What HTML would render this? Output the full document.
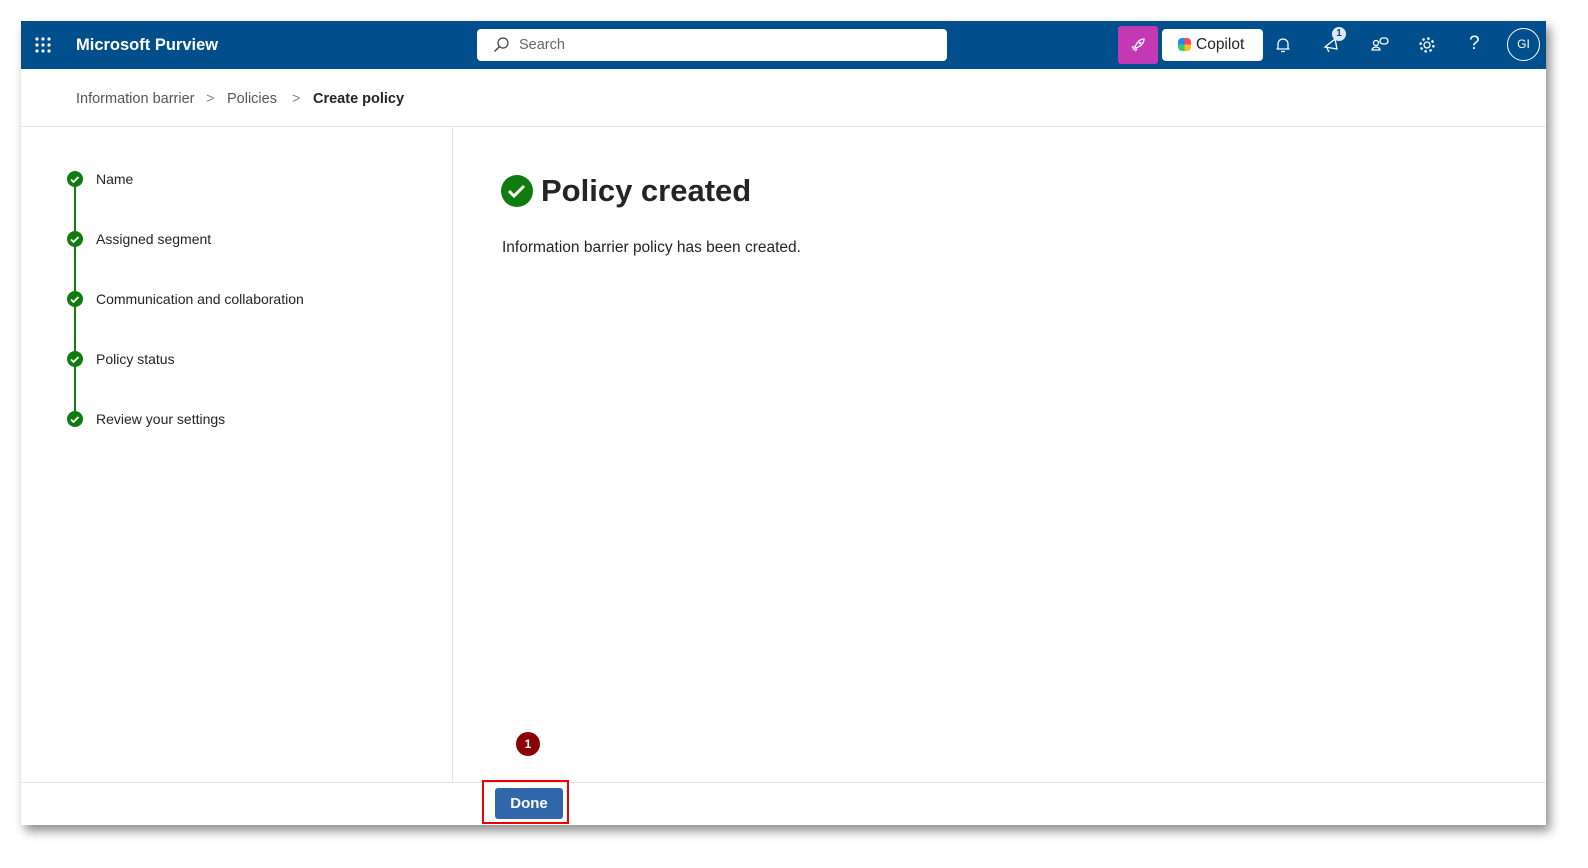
<!DOCTYPE html>
<html><head><meta charset="utf-8"><style>
*{margin:0;padding:0;box-sizing:border-box}
body{width:1588px;height:868px;background:#fff;font-family:"Liberation Sans",sans-serif;position:relative;overflow:hidden}
.win{position:absolute;left:21px;top:21px;width:1525px;height:804px;background:#fff;box-shadow:4px 6px 10px rgba(0,0,0,.45)}
.top{position:absolute;left:0;top:0;width:1525px;height:48px;background:#004e8c;color:#fff}
.abs{position:absolute}
.crumb{position:absolute;top:70px;font-size:14.5px;color:#555}
.step{position:absolute;left:46px;width:16px;height:16px;border-radius:50%;background:#107c10}
.stepline{position:absolute;left:53px;width:2px;height:44px;background:#107c10}
.stxt{position:absolute;left:75px;font-size:14px;color:#242424}
</style></head><body>
<div class="win">
 <div class="top">
  <svg class="abs" style="left:14px;top:16px" width="16" height="16"><g fill="#fff"><circle cx="2" cy="2" r="1.6"/><circle cx="8" cy="2" r="1.6"/><circle cx="14" cy="2" r="1.6"/><circle cx="2" cy="8" r="1.6"/><circle cx="8" cy="8" r="1.6"/><circle cx="14" cy="8" r="1.6"/><circle cx="2" cy="14" r="1.6"/><circle cx="8" cy="14" r="1.6"/><circle cx="14" cy="14" r="1.6"/></g></svg>
  <div class="abs" style="left:55px;top:15px;font-size:16.5px;font-weight:bold">Microsoft Purview</div>
  <div class="abs" style="left:456px;top:8px;width:470px;height:32px;background:#fff;border-radius:4px;color:#666;font-size:14.5px;padding:8px 0 0 42px">Search
   <svg class="abs" style="left:16px;top:8px" width="16" height="16"><circle cx="10" cy="6" r="5" fill="none" stroke="#444" stroke-width="1.3"/><path d="M6.5 9.5 L1.5 14.5" stroke="#444" stroke-width="1.4"/></svg></div>
  <div class="abs" style="left:1097px;top:5px;width:40px;height:38px;background:#c239b3;border-radius:3px"><svg class="abs" style="left:12px;top:11px" width="16" height="16"><path d="M5 11 L3 13 M7 12 L5 14 M4 9 L2 11 M5 10 C7 5 10 2 14 2 C14 6 11 9 6 11 Z" fill="none" stroke="#fff" stroke-width="1.3"/><circle cx="10" cy="6" r="1.3" fill="#fff"/></svg></div>
  <div class="abs" style="left:1141px;top:8px;width:101px;height:32px;background:#fff;border-radius:4px;color:#242424;font-size:15.5px;padding:7px 0 0 34px">Copilot
   <div class="abs" style="left:16px;top:9px;width:13px;height:13px;border-radius:4px;background:conic-gradient(#f45 0 25%,#fb2 0 50%,#3c6 0 75%,#28f 0)"></div></div>
  <svg class="abs" style="left:1253px;top:15px" width="18" height="18"><path d="M4 13 V8 a5 5 0 0 1 10 0 V13 Z M2.5 13 H15.5 M7 15.5 H11" fill="none" stroke="#fff" stroke-width="1.3"/></svg>
  <svg class="abs" style="left:1301px;top:14px" width="20" height="20"><path d="M3 12 L13 4 L15 14 Z M5 13 L7 17" fill="none" stroke="#fff" stroke-width="1.3"/></svg>
  <div class="abs" style="left:1311px;top:6px;width:14px;height:14px;border-radius:50%;background:#deeaf6;color:#004e8c;font-size:10px;text-align:center;line-height:14px;font-weight:bold">1</div>
  <svg class="abs" style="left:1350px;top:15px" width="20" height="18"><circle cx="5" cy="7" r="2.5" fill="none" stroke="#fff" stroke-width="1.3"/><path d="M1 14 a4 3 0 0 1 8 0 Z" fill="none" stroke="#fff" stroke-width="1.3"/><rect x="9" y="2" width="8" height="6" rx="3" fill="none" stroke="#fff" stroke-width="1.3"/></svg>
  <svg class="abs" style="left:1397px;top:15px" width="18" height="18"><circle cx="9" cy="9" r="3" fill="none" stroke="#fff" stroke-width="1.3"/><circle cx="9" cy="9" r="6.5" fill="none" stroke="#fff" stroke-width="2.2" stroke-dasharray="2.5 2.6"/></svg>
  <div class="abs" style="left:1448px;top:12px;font-size:19px">?</div>
  <div class="abs" style="left:1486px;top:7px;width:33px;height:33px;border-radius:50%;border:1px solid #fff;font-size:12px;text-align:center;line-height:31px">GI</div>
 </div>
 <div class="crumb" style="left:55px">Information barrier</div>
 <div class="crumb" style="left:185px;color:#888">&gt;</div>
 <div class="crumb" style="left:206px">Policies</div>
 <div class="crumb" style="left:271px;color:#888">&gt;</div>
 <div class="crumb" style="left:292px;color:#242424;font-weight:bold">Create policy</div>
 <div class="abs" style="left:0;top:105px;width:1525px;height:1px;background:#e6e6e6"></div>
 <div class="abs" style="left:431px;top:106px;width:1px;height:655px;background:#e6e6e6"></div>
 <div class="abs" style="left:0;top:761px;width:1525px;height:1px;background:#e6e6e6"></div>

 <div class="step" style="top:150px"></div><div class="stepline" style="top:166px"></div>
 <div class="step" style="top:210px"></div><div class="stepline" style="top:226px"></div>
 <div class="step" style="top:270px"></div><div class="stepline" style="top:286px"></div>
 <div class="step" style="top:330px"></div><div class="stepline" style="top:346px"></div>
 <div class="step" style="top:390px"></div>
 <div class="stxt" style="top:150px">Name</div>
 <div class="stxt" style="top:210px">Assigned segment</div>
 <div class="stxt" style="top:270px">Communication and collaboration</div>
 <div class="stxt" style="top:330px">Policy status</div>
 <div class="stxt" style="top:390px">Review your settings</div>
 <svg class="abs" style="left:0;top:0" width="600" height="420"><g fill="none" stroke="#fff" stroke-width="1.8"><path d="M50 158.5 l2.5 2.5 l5 -5"/><path d="M50 218.5 l2.5 2.5 l5 -5"/><path d="M50 278.5 l2.5 2.5 l5 -5"/><path d="M50 338.5 l2.5 2.5 l5 -5"/><path d="M50 398.5 l2.5 2.5 l5 -5"/></g>
 <circle cx="496" cy="170" r="16" fill="#107c10"/><path d="M488 170 l5 5 l10 -10" fill="none" stroke="#fff" stroke-width="3"/></svg>
 <div class="abs" style="left:520px;top:152px;font-size:31px;font-weight:bold;color:#242424">Policy created</div>
 <div class="abs" style="left:481px;top:218px;font-size:15.5px;color:#242424">Information barrier policy has been created.</div>

 <div class="abs" style="left:495px;top:711px;width:24px;height:24px;border-radius:50%;background:#8b0000;color:#fff;font-size:12px;font-weight:bold;text-align:center;line-height:24px">1</div>
 <div class="abs" style="left:461px;top:759px;width:87px;height:44px;border:2px solid #e00"></div>
 <div class="abs" style="left:474px;top:767px;width:68px;height:31px;background:#2f67aa;border-radius:3px;color:#fff;font-weight:bold;font-size:15px;text-align:center;line-height:31px">Done</div>
</div>
</body></html>
